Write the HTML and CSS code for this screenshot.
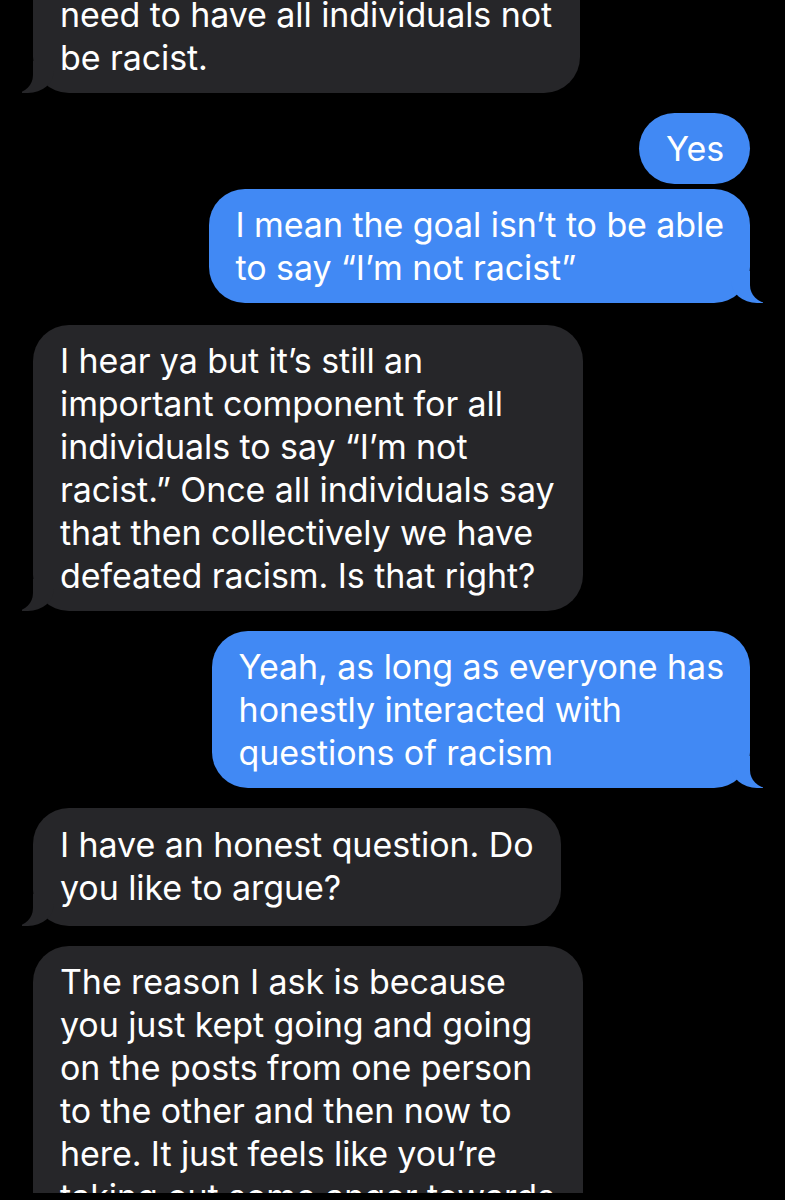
FILE: index.html
```html
<!DOCTYPE html>
<html lang="en">
<head>
<meta charset="utf-8">
<title>Messages</title>
<link rel="stylesheet" href="styles.css">
</head>
<body>
<div class="thread">
  <div class="msg in tail first">need to have all individuals not<br>be racist.</div>
  <div class="msg out gap-l">Yes</div>
  <div class="msg out tail gap-s">I mean the goal isn’t to be able<br>to say “I’m not racist”</div>
  <div class="msg in tail gap-xl">I hear ya but it’s still an<br>important component for all<br>individuals to say “I’m not<br>racist.” Once all individuals say<br>that then collectively we have<br>defeated racism. Is that right?</div>
  <div class="msg out tail gap-l">Yeah, as long as everyone has<br>honestly interacted with<br>questions of racism</div>
  <div class="msg in tail gap-l tall">I have an honest question. Do<br>you like to argue?</div>
  <div class="msg in gap-l">The reason I ask is because<br>you just kept going and going<br>on the posts from one person<br>to the other and then now to<br>here. It just feels like you’re<br>taking out some anger towards<br>something</div>
</div>
</body>
</html>
```
FILE: styles.css
```css
html, body {
  margin: 0;
  padding: 0;
  background: #000;
  height: 1200px;
  overflow: hidden;
}

.thread {
  display: flex;
  flex-direction: column;
  padding: 0 35px 0 33px;
  font-family: Inter, "Noto Sans", sans-serif;
  font-size: 34px;
  line-height: 43px;
  letter-spacing: -0.08px;
  color: #fff;
  height: 1193px;
  overflow: hidden;
}

.msg {
  position: relative;
  white-space: nowrap;
  border-radius: 36px;
  padding: 14px 28px 14px 27px;
  max-width: fit-content;
}

.msg.in {
  align-self: flex-start;
  background: #262629;
}

.msg.out {
  align-self: flex-end;
  background: #4189f4;
  padding: 14px 26px 14px 27px;
}

.msg.first {
  margin-top: -60px;
  padding-top: 53px;
}

.msg.tall {
  padding-top: 15px;
  padding-bottom: 17px;
}

.gap-s { margin-top: 5px; }
.gap-l { margin-top: 20px; }
.gap-xl { margin-top: 22px; }

.msg.tail::before,
.msg.tail::after {
  content: "";
  position: absolute;
  bottom: 0;
  height: 32px;
}

.msg.in.tail::before {
  left: -11px;
  width: 32px;
  background: #262629;
  border-bottom-right-radius: 26px 22px;
}

.msg.in.tail::after {
  left: -40px;
  width: 40px;
  background: #000;
  border-bottom-right-radius: 18px;
}

.msg.out.tail::before {
  right: -13px;
  width: 32px;
  background: #4189f4;
  border-bottom-left-radius: 26px 22px;
}

.msg.out.tail::after {
  right: -40px;
  width: 40px;
  background: #000;
  border-bottom-left-radius: 18px;
}
```
